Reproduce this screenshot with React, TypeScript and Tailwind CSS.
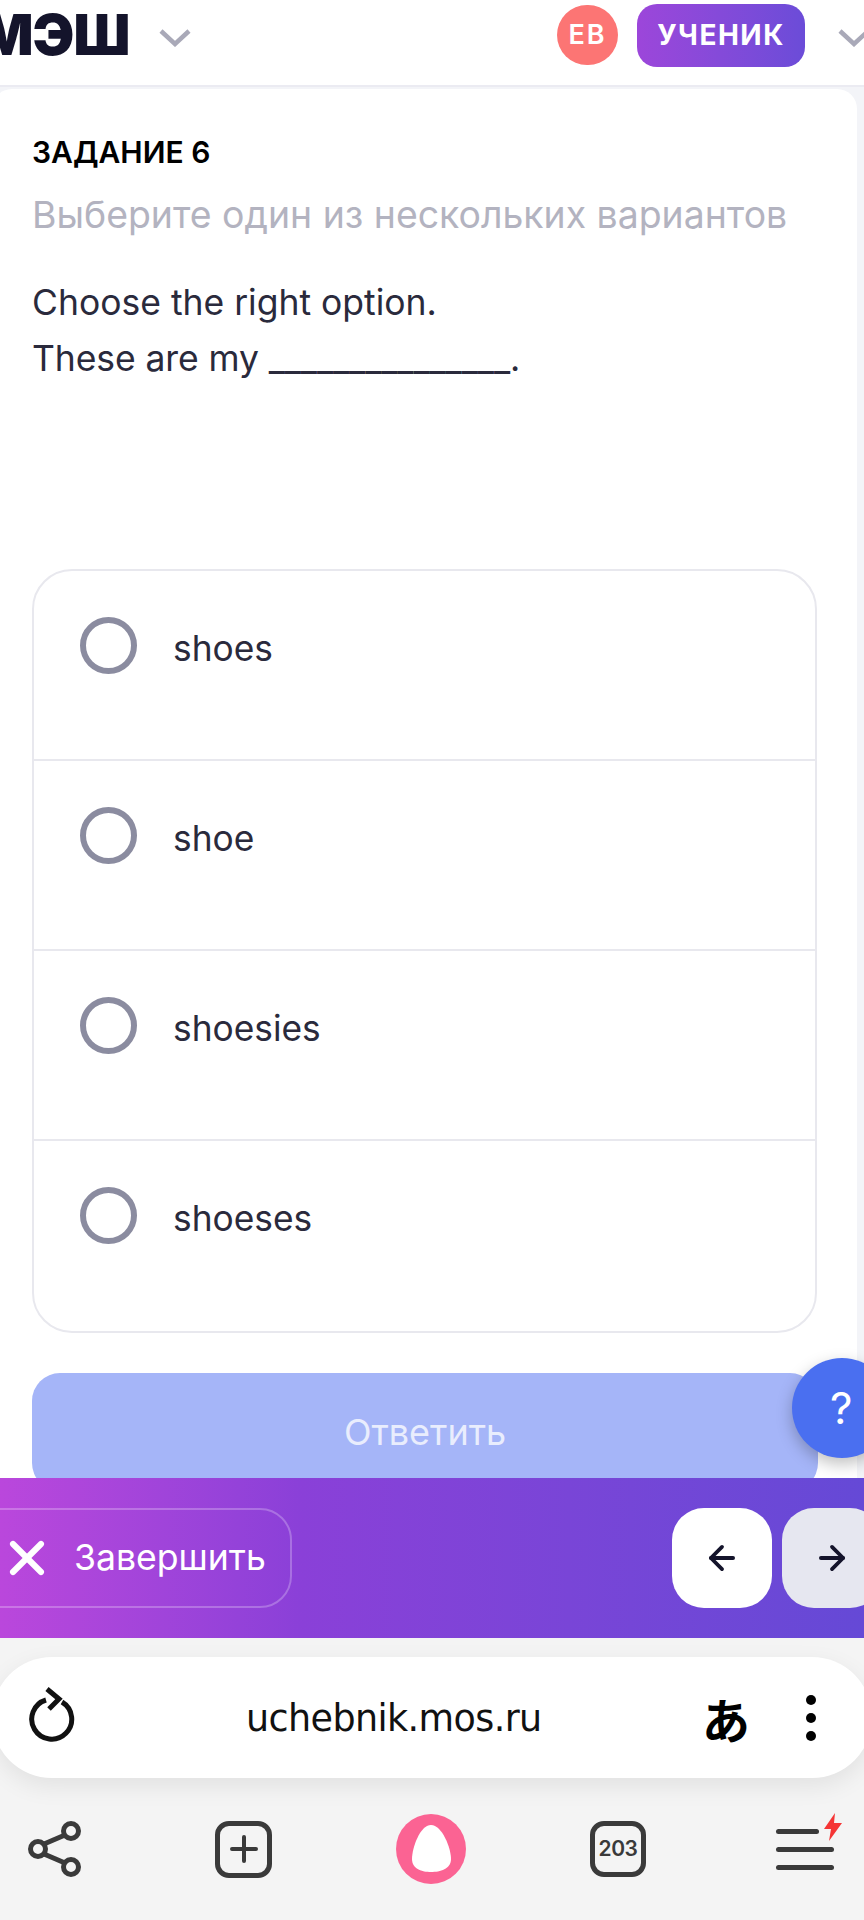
import React from 'react';
import { ArrowLeft, ArrowRight, X } from 'lucide-react';

const options = ['shoes', 'shoe', 'shoesies', 'shoeses'];

const Chevron = () => (
  <svg width="32" height="18" viewBox="0 0 32 18" fill="none" stroke="#a9a9b8" strokeWidth="4.5">
    <path d="M2 2 L16 15 L30 2" />
  </svg>
);

const Header = () => (
  <header className="h-[85px] shrink-0 bg-white flex items-center pb-[15px] overflow-hidden relative">
    <span className="-ml-[20px] text-[56px] leading-none font-black text-[#14142b] blur-[0.7px] tracking-[-1px]">МЭШ</span>
    <div className="ml-[30px] mt-[6px]">
      <Chevron />
    </div>
    <div className="ml-auto flex items-center">
      <div className="w-[61px] h-[60px] rounded-full bg-[#fc7574] text-white text-[27px] font-semibold tracking-[2px] flex items-center justify-center">
        ЕВ
      </div>
      <div className="ml-[19px] w-[168px] h-[63px] rounded-[20px] bg-gradient-to-r from-[#9c46da] to-[#6b4cd8] text-white text-[28px] font-bold tracking-[1.5px] flex items-center justify-center">
        УЧЕНИК
      </div>
      <div className="ml-[33px] -mr-[6px] mt-[6px]">
        <Chevron />
      </div>
    </div>
  </header>
);

const Task = () => (
  <main className="relative h-[1393px] shrink-0 overflow-hidden bg-[#f3f4f8] border-t-2 border-[#ebebf2]">
    <div className="-ml-2 mr-[7px] mt-[2px] h-[1500px] rounded-[20px] bg-white pl-[40px] pr-[40px] pt-[45px]">
      <h1 className="text-[30px] leading-[36px] font-semibold text-black">ЗАДАНИЕ 6</h1>
      <p className="mt-[21px] text-[37.4px] leading-[48px] text-[#b3b3c0]">Выберите один из нескольких вариантов</p>
      <div className="mt-[36px] h-[294px] text-[35.5px] leading-[56px] text-[#2a2a3c]">
        <p>Choose the right option.</p>
        <p className="tracking-[-0.1px]">These are my _______________.</p>
      </div>
      <div className="w-[785px] rounded-[40px] border-2 border-[#e8e8ee] divide-y-2 divide-[#e8e8ee]">
        {options.map((option) => (
          <div key={option} className="h-[190px] pl-[46px] pt-[46px] flex items-start">
            <span className="w-[57px] h-[57px] rounded-full border-[6px] border-[#8b8ca0] shrink-0" />
            <span className="ml-[36px] mt-[8px] text-[35.3px] leading-[48px] text-[#2a2a3c]">{option}</span>
          </div>
        ))}
      </div>
      <button className="mt-[40px] w-[786px] h-[118px] rounded-[28px] bg-[#a5b5f8] text-[36px] text-[#e9edfd]">
        Ответить
      </button>
    </div>
    <div className="absolute left-[792px] top-[1271px] w-[100px] h-[100px] rounded-full bg-[#4a6ff0] shadow-[0_6px_16px_rgba(0,0,0,0.25)] text-white text-[44px] flex items-center pl-[38px]">
      ?
    </div>
  </main>
);

const ActionBar = () => (
  <div className="h-[160px] shrink-0 bg-gradient-to-r from-[#ba47dc] via-[#8a40d8] via-35% to-[#6549d6] flex items-center overflow-hidden">
    <div className="-ml-[30px] w-[322px] h-[100px] rounded-[32px] border-2 border-white/25 flex items-center pl-[27px]">
      <X className="w-[56px] h-[56px] text-white" strokeWidth={2.6} />
      <span className="ml-[19px] text-[35.6px] text-white">Завершить</span>
    </div>
    <div className="ml-auto flex gap-[10px] -mr-[18px]">
      <div className="w-[100px] h-[100px] rounded-[32px] bg-white flex items-center justify-center">
        <ArrowLeft className="w-[38px] h-[38px] text-[#14142b]" strokeWidth={2.4} />
      </div>
      <div className="w-[100px] h-[100px] rounded-[32px] bg-[#e6e7f0] flex items-center justify-center">
        <ArrowRight className="w-[38px] h-[38px] text-[#14142b]" strokeWidth={2.4} />
      </div>
    </div>
  </div>
);

const BrowserBar = () => (
  <div className="flex-1 bg-[#f4f4f4] overflow-hidden">
    <div className="mt-[19px] -mx-2 h-[121px] rounded-[60px] bg-white shadow-[0_8px_24px_rgba(0,0,0,0.08)] flex items-center pl-[37px] pr-[56px] relative">
      <svg className="-mt-[6px]" width="46" height="56" viewBox="0 0 46 56" fill="none" stroke="#111" strokeWidth="5" strokeLinejoin="miter">
        <path d="M17 13 A20 20 0 1 0 33 15" />
        <path d="M18 2 L30 12 L20 22" />
      </svg>
      <span className="ml-[171px] mt-[3px] text-[36.5px] font-['DejaVu_Sans',sans-serif] text-[#111] tracking-[-0.6px]">uchebnik.mos.ru</span>
      <span className="ml-auto text-[48px] leading-none font-bold font-['Noto_Sans_CJK_JP',sans-serif] text-black">あ</span>
      <div className="ml-[56px] flex flex-col gap-[8px]">
        <span className="w-[10px] h-[10px] rounded-full bg-black" />
        <span className="w-[10px] h-[10px] rounded-full bg-black" />
        <span className="w-[10px] h-[10px] rounded-full bg-black" />
      </div>
    </div>
    <div className="mt-[36px] pl-[28px] h-[70px] flex items-center">
      {/* share */}
      <svg width="54" height="56" viewBox="0 0 54 56" fill="none" stroke="#3a3a3a" strokeWidth="5">
        <circle cx="10" cy="28" r="7.5" />
        <circle cx="43" cy="10" r="7.5" />
        <circle cx="43" cy="46" r="7.5" />
        <path d="M16 23 L37 14 M16 33 L37 42" />
      </svg>
      {/* new tab */}
      <div className="ml-[133px] w-[57px] h-[57px] rounded-[14px] border-[5px] border-[#3a3a3a] flex items-center justify-center">
        <svg width="28" height="28" viewBox="0 0 28 28" stroke="#3a3a3a" strokeWidth="4" strokeLinecap="round">
          <path d="M14 2 V26 M2 14 H26" />
        </svg>
      </div>
      {/* alice */}
      <svg className="ml-[124px]" width="70" height="70" viewBox="0 0 70 70">
        <circle cx="35" cy="35" r="35" fill="#fb6393" />
        <path d="M35 11 C46 11 55 34 55 45 C55 55 44 58 35 58 C26 58 16 55 16 45 C16 34 24 11 35 11 Z" fill="#fff" />
      </svg>
      {/* tabs */}
      <div className="ml-[124px] w-[56px] h-[56px] rounded-[14px] border-[5px] border-[#3a3a3a] flex items-center justify-center text-[21px] font-semibold text-[#3a3a3a] tracking-[-0.5px]">
        203
      </div>
      {/* menu */}
      <div className="ml-[130px] relative w-[66px] h-[60px] flex flex-col justify-center gap-[13px]">
        <span className="w-[43px] h-[5px] rounded-full bg-[#3a3a3a]" />
        <span className="w-[58px] h-[5px] rounded-full bg-[#3a3a3a]" />
        <span className="w-[58px] h-[5px] rounded-full bg-[#3a3a3a]" />
        <svg className="absolute right-0 -top-[6px]" width="18" height="28" viewBox="0 0 18 28">
          <path d="M11 0 L0 16 H7 L5 28 L18 10 H10 Z" fill="#f53535" />
        </svg>
      </div>
    </div>
  </div>
);

export default function App() {
  return (
    <div className="w-[864px] h-[1920px] overflow-hidden flex flex-col font-['Inter',sans-serif] bg-white">
      <Header />
      <Task />
      <ActionBar />
      <BrowserBar />
    </div>
  );
}
